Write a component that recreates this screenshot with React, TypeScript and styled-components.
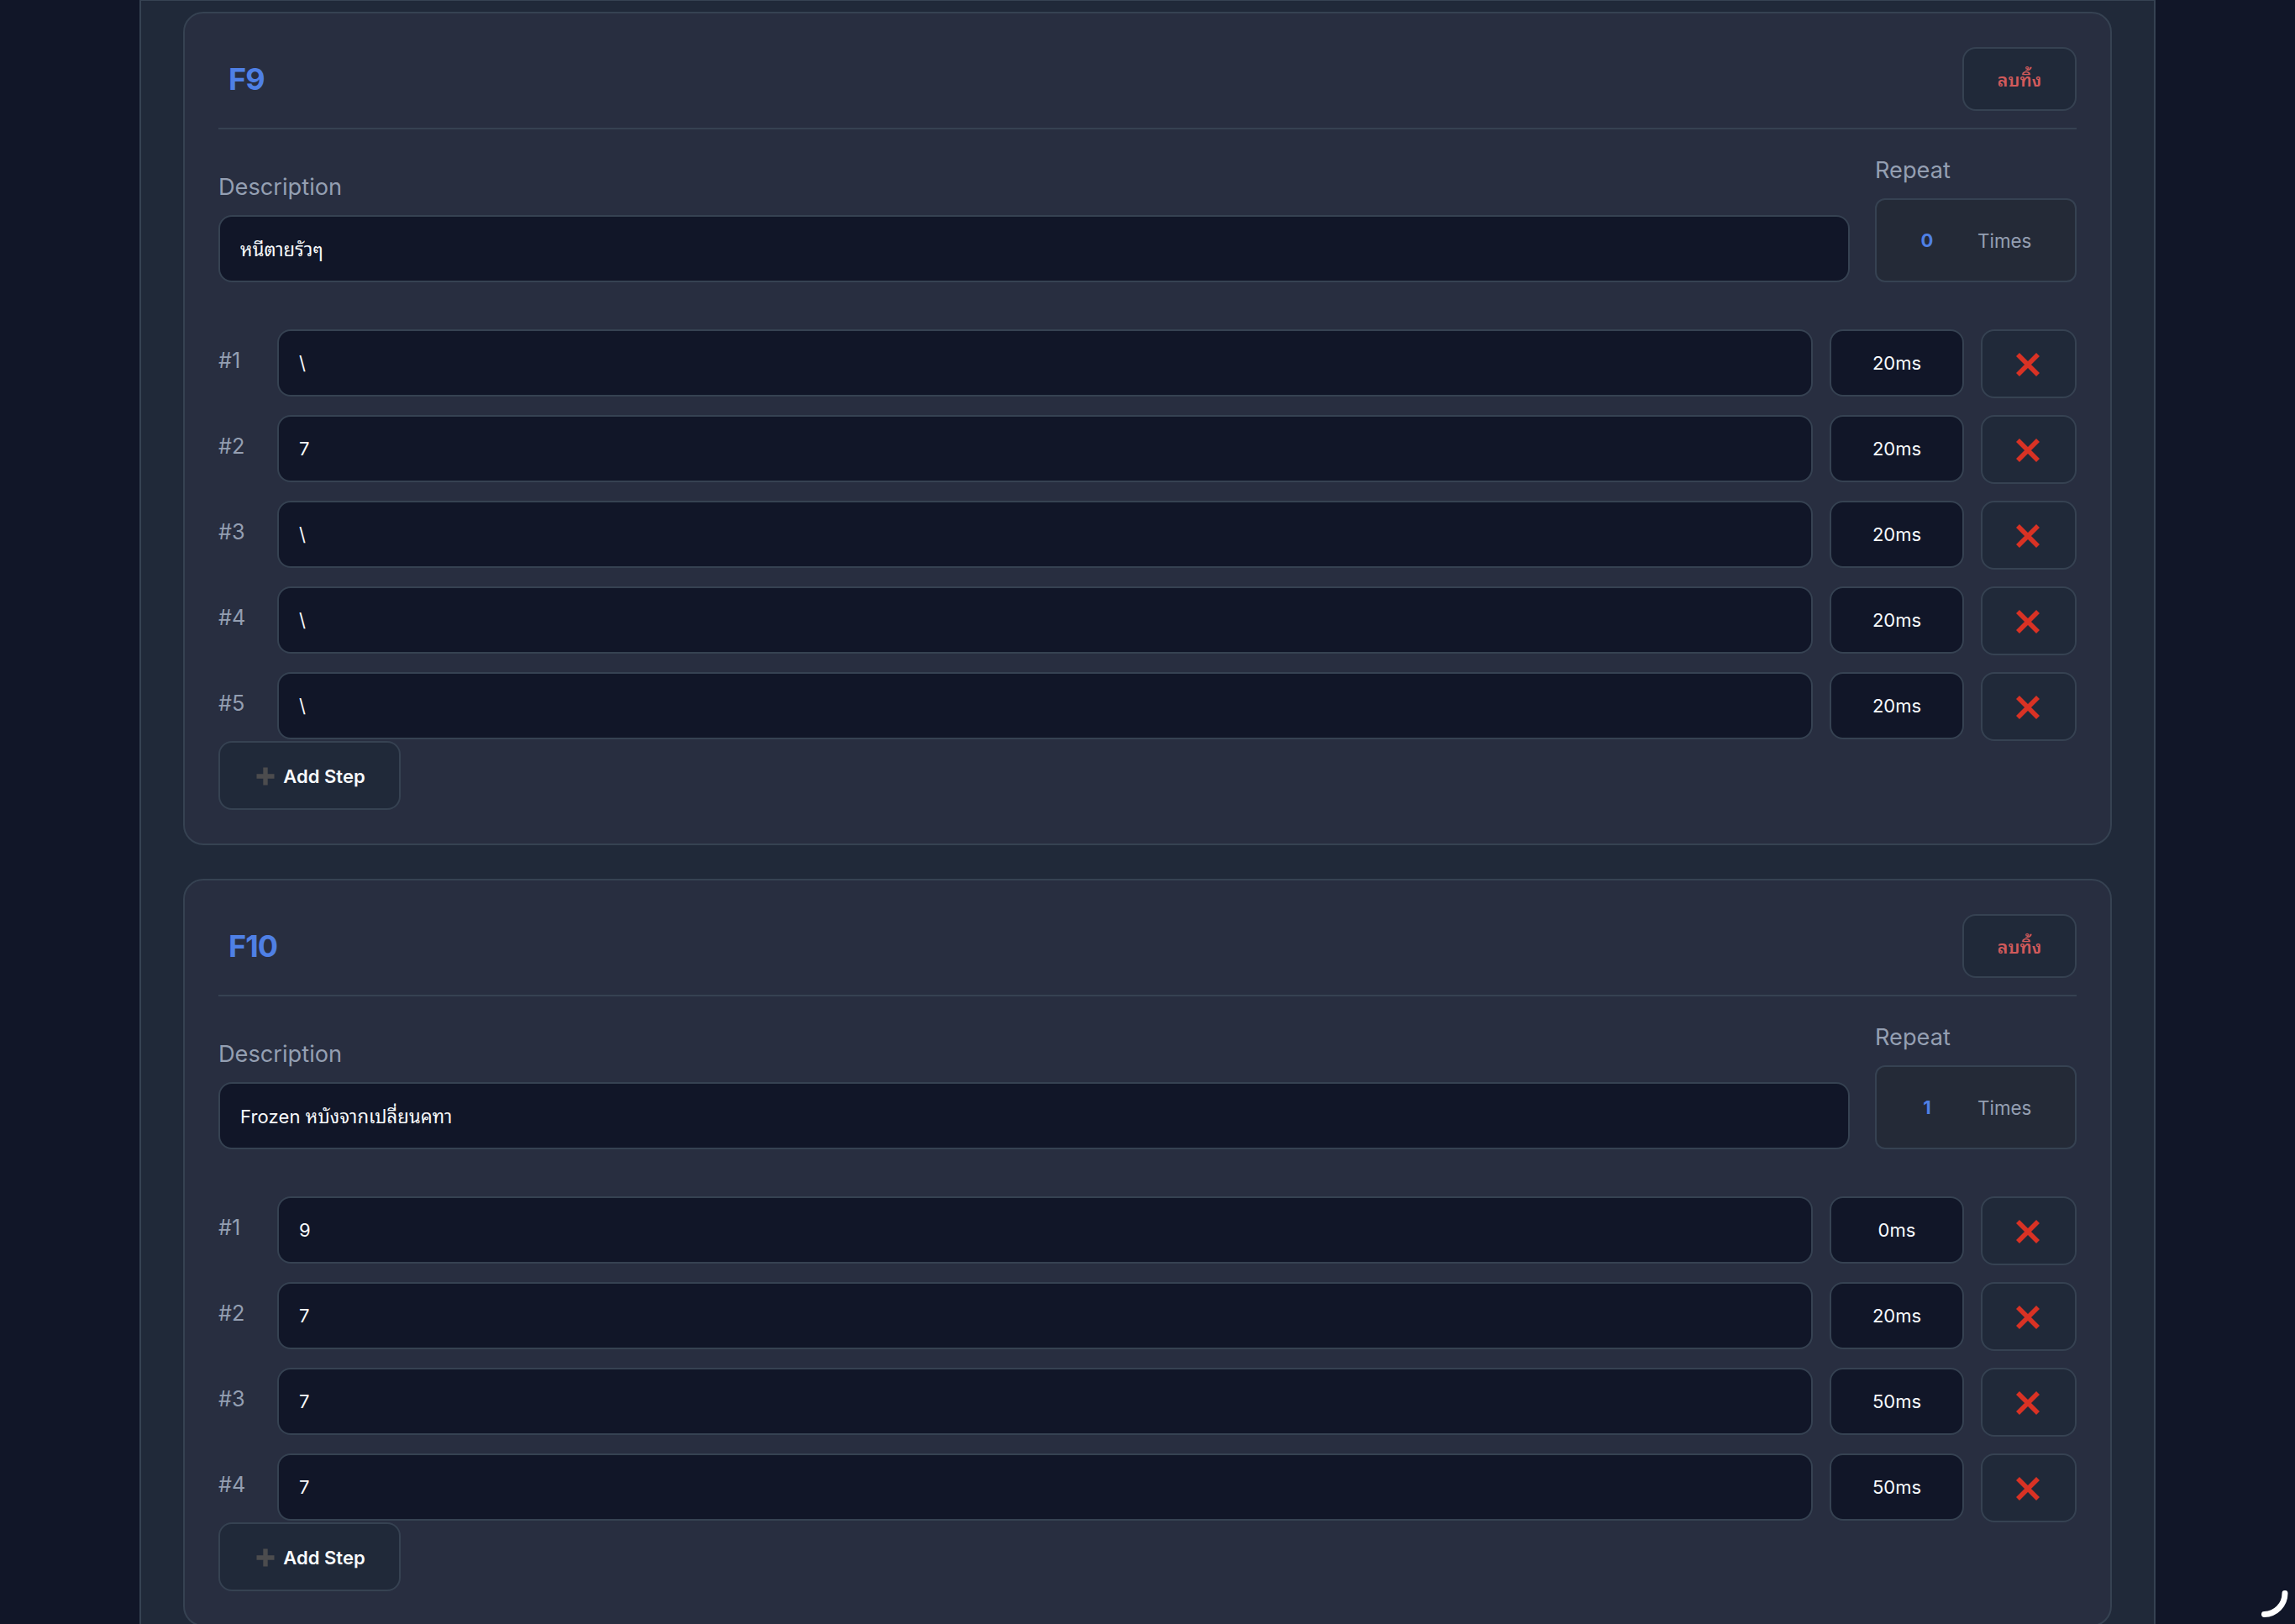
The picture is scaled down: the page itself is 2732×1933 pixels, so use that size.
import { useState } from "react";
import styled, { createGlobalStyle } from "styled-components";

const GlobalStyle = createGlobalStyle`
  * {
    box-sizing: border-box;
  }

  body {
    margin: 0;
    overflow: hidden;
    background-color: #111628;
    font-family: Inter, "Noto Sans Thai Looped", Loma, Garuda, Waree, "Noto Sans Thai", "Noto Sans", sans-serif;
    color: #ffffff;
  }

  input, button {
    font-family: inherit;
    margin: 0;
    outline: none;
  }
`;

const Page = styled.main`
  height: 1933px;
  overflow: hidden;
`;

const Panel = styled.section`
  width: 2400px;
  margin: -1px auto 0;
  padding: 13px 50px 50px;
  border: 2px solid #364252;
  background-color: #202939;
  display: flex;
  flex-direction: column;
  gap: 40px;
`;

const Card = styled.article`
  padding: 40px;
  border: 2px solid #364252;
  border-radius: 24px;
  background-color: #282e40;
`;

const CardHeader = styled.header`
  display: flex;
  align-items: center;
  justify-content: space-between;
  padding-bottom: 20px;
  border-bottom: 2px solid #364252;
`;

const KeyInput = styled.input`
  width: 300px;
  height: 76px;
  padding: 0 12px;
  border: 0;
  background: transparent;
  color: #4f80e5;
  font-size: 36px;
  font-weight: 700;
  letter-spacing: -1px;
`;

const Button = styled.button`
  height: 82px;
  display: flex;
  align-items: center;
  justify-content: center;
  padding: 0;
  border: 2px solid #364252;
  border-radius: 16px;
  background-color: #202939;
  color: #f8fafc;
  font-size: 22px;
  font-weight: 600;
  cursor: pointer;
`;

const DeleteButton = styled(Button)`
  width: 136px;
  height: 76px;
  padding-bottom: 3px;
  color: #d15a5b;
  font-size: 21.2px;
`;

const RemoveButton = styled(Button)`
  width: 114px;
  padding: 2px 2px 0 0;
`;

const AddButton = styled(Button)`
  width: 217px;
  gap: 10px;
  padding: 2px 0 0 3px;
`;

const Meta = styled.div`
  display: flex;
  align-items: flex-end;
  gap: 30px;
  height: 182px;
  margin-bottom: 56px;
`;

const Field = styled.label<{ $grow?: boolean }>`
  display: flex;
  flex-direction: column;
  gap: 15px;
  ${({ $grow }) => ($grow ? "flex: 1;" : "width: 240px;")}

  & > span {
    color: #949fb2;
    font-size: 27.2px;
    line-height: 36px;
  }
`;

const TextInput = styled.input<{ $center?: boolean }>`
  height: 80px;
  min-width: 0;
  padding: 0 24px;
  border: 2px solid #364252;
  border-radius: 16px;
  background-color: #111628;
  color: #f8fafc;
  font-size: 22px;
  ${({ $center }) => ($center ? "width: 160px; text-align: center;" : "flex: 1;")}
`;

const WideInput = styled(TextInput)`
  flex: none;
  width: 100%;
  padding-bottom: 3px;
  letter-spacing: 0.12px;
`;

const RepeatBox = styled.div`
  width: 240px;
  height: 100px;
  display: flex;
  align-items: center;
  border: 2px solid #364252;
  border-radius: 12px;
  background-color: #242a37;
  color: #949fb2;
  font-size: 22.4px;

  & > input {
    width: 120px;
    padding: 0;
    border: 0;
    background: transparent;
    color: #4f80e5;
    text-align: center;
    font-size: 22px;
    font-weight: 700;
  }
`;

const StepRow = styled.div`
  display: flex;
  align-items: flex-start;
  gap: 20px;

  & + & {
    margin-top: 20px;
  }
`;

const StepIndex = styled.span`
  width: 50px;
  padding-top: 20px;
  color: #949fb2;
  font-size: 25.2px;
  line-height: 34px;
`;

const Spinner = styled.svg`
  position: fixed;
  right: 8px;
  bottom: 8px;
`;

type Step = { key: string; delay: string };
type Macro = { name: string; description: string; repeat: string; steps: Step[] };

const initialMacros: Macro[] = [
  {
    name: "F9",
    description: "หนีตายรัวๆ",
    repeat: "0",
    steps: [
      { key: "\\", delay: "20ms" },
      { key: "7", delay: "20ms" },
      { key: "\\", delay: "20ms" },
      { key: "\\", delay: "20ms" },
      { key: "\\", delay: "20ms" },
    ],
  },
  {
    name: "F10",
    description: "Frozen หบังจากเปลี่ยนคทา",
    repeat: "1",
    steps: [
      { key: "9", delay: "0ms" },
      { key: "7", delay: "20ms" },
      { key: "7", delay: "50ms" },
      { key: "7", delay: "50ms" },
    ],
  },
];

const CrossIcon = () => (
  <svg width="28" height="28" viewBox="0 0 28 28">
    <path d="M2 2 26 26M26 2 2 26" stroke="#d93224" strokeWidth="5.6" />
  </svg>
);

const PlusIcon = () => (
  <svg width="22" height="22" viewBox="0 0 22 22">
    <path d="M11 0.5V21.5M0.5 11H21.5" stroke="#4c4c4e" strokeWidth="5.4" />
  </svg>
);

export default function App() {
  const [macros, setMacros] = useState(initialMacros);

  const update = (index: number, patch: Partial<Macro>) =>
    setMacros(macros.map((macro, i) => (i === index ? { ...macro, ...patch } : macro)));

  const updateStep = (index: number, stepIndex: number, patch: Partial<Step>) =>
    update(index, {
      steps: macros[index].steps.map((step, i) => (i === stepIndex ? { ...step, ...patch } : step)),
    });

  return (
    <Page>
      <GlobalStyle />
      <Panel>
        {macros.map((macro, index) => (
          <Card key={index}>
            <CardHeader>
              <KeyInput value={macro.name} onChange={(e) => update(index, { name: e.target.value })} />
              <DeleteButton onClick={() => setMacros(macros.filter((_, i) => i !== index))}>ลบทิ้ง</DeleteButton>
            </CardHeader>

            <Meta>
              <Field $grow>
                <span>Description</span>
                <WideInput
                  value={macro.description}
                  onChange={(e) => update(index, { description: e.target.value })}
                />
              </Field>
              <Field>
                <span>Repeat</span>
                <RepeatBox>
                  <input value={macro.repeat} onChange={(e) => update(index, { repeat: e.target.value })} />
                  Times
                </RepeatBox>
              </Field>
            </Meta>

            {macro.steps.map((step, i) => (
              <StepRow key={i}>
                <StepIndex>#{i + 1}</StepIndex>
                <TextInput value={step.key} onChange={(e) => updateStep(index, i, { key: e.target.value })} />
                <TextInput
                  $center
                  value={step.delay}
                  onChange={(e) => updateStep(index, i, { delay: e.target.value })}
                />
                <RemoveButton
                  onClick={() => update(index, { steps: macro.steps.filter((_, n) => n !== i) })}
                >
                  <CrossIcon />
                </RemoveButton>
              </StepRow>
            ))}

            <AddButton onClick={() => update(index, { steps: [...macro.steps, { key: "", delay: "20ms" }] })}>
              <PlusIcon />
              Add Step
            </AddButton>
          </Card>
        ))}
      </Panel>

      <Spinner width="32" height="32" viewBox="0 0 32 32">
        <path d="M28 3.5A25 25 0 0 1 3.5 28.5" fill="none" stroke="#ffffff" strokeWidth="7" strokeLinecap="round" />
      </Spinner>
    </Page>
  );
}
